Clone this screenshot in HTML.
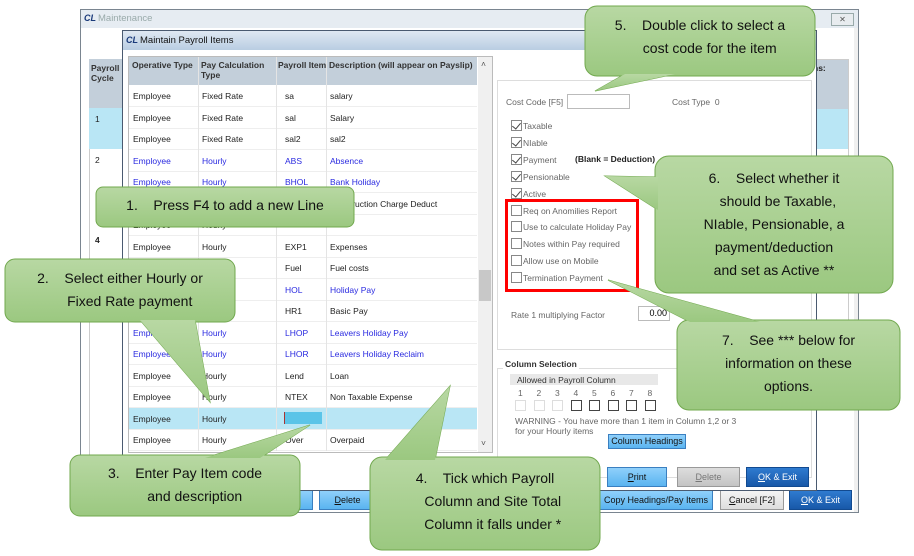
<!DOCTYPE html>
<html><head><meta charset="utf-8"><style>
*{margin:0;padding:0;box-sizing:border-box}
body{width:914px;height:556px;background:#fff;position:relative;overflow:hidden;font-family:"Liberation Sans",sans-serif}
.a{position:absolute}
.t{position:absolute;font-size:8.5px;color:#222;white-space:nowrap}
.bl{color:#2a2ae0}
.cb{position:absolute;width:11px;height:11px;border:1px solid #888;background:#fff}
.ck::after{content:"";position:absolute;left:2px;top:0px;width:4px;height:7px;border:solid #444;border-width:0 1.3px 1.3px 0;transform:rotate(40deg)}
.btn{position:absolute;height:20px;border:1px solid #3a7fc0;background:linear-gradient(#8fd0fb,#5ab4f0);font-size:9px;text-align:center;line-height:18px;color:#111}
.ct{position:absolute;font-family:"Liberation Sans",sans-serif;font-size:14px;color:#111;text-align:center;line-height:23px}
</style></head><body>
<div class="a" style="left:80px;top:9px;width:779px;height:504px;border:1px solid #7a8590;background:#fff"></div>
<div class="a" style="left:81px;top:10px;width:777px;height:18px;background:#e6ecf2"></div>
<div class="t" style="left:84px;top:13px;font-size:9px;font-weight:bold;color:#1a3a7a;font-style:italic">CL</div>
<div class="t" style="left:98px;top:13px;font-size:9.5px;color:#9aa">Maintenance</div>
<div class="a" style="left:831px;top:13px;width:23px;height:13px;border:1px solid #9aa;background:#e8ecef;font-size:8px;text-align:center;line-height:11px;color:#555">✕</div>
<div class="a" style="left:854px;top:28px;width:4px;height:484px;background:#f0f0f0"></div>
<div class="a" style="left:89px;top:59px;width:33px;height:410px;border-left:1px solid #ccc;background:#fff"></div>
<div class="a" style="left:89px;top:59px;width:33px;height:49px;background:#c3cfda"></div>
<div class="t" style="left:91px;top:63px;line-height:10px;font-weight:bold;color:#333">Payroll<br>Cycle</div>
<div class="a" style="left:89px;top:108px;width:33px;height:41px;background:#b9e6f5"></div>
<div class="t" style="left:95px;top:114px">1</div>
<div class="t" style="left:95px;top:155px">2</div>
<div class="t" style="left:95px;top:235px;font-weight:bold">4</div>
<div class="a" style="left:812px;top:59px;width:37px;height:300px;border:1px solid #ccc;background:#fff"></div>
<div class="a" style="left:813px;top:60px;width:35px;height:49px;background:#c3cfda"></div>
<div class="t" style="left:813px;top:63px;font-weight:bold">ns:</div>
<div class="a" style="left:813px;top:109px;width:35px;height:40px;background:#b9e6f5"></div>
<div class="btn" style="left:220px;top:490px;width:93px"></div>
<div class="btn" style="left:319px;top:490px;width:57px"><u>D</u>elete</div>
<div class="btn" style="left:599px;top:490px;width:114px">Copy Headings/Pay Items</div>
<div class="btn" style="left:720px;top:490px;width:64px;background:linear-gradient(#f4f4f4,#ddd);border-color:#999"><u>C</u>ancel [F2]</div>
<div class="btn" style="left:789px;top:490px;width:63px;background:linear-gradient(#2f7bd0,#1858a8);color:#fff;border-color:#124a90"><u>O</u>K &amp; Exit</div>
<div class="a" style="left:122px;top:30px;width:695px;height:461px;border:1px solid #4a5a70;background:#fff"></div>
<div class="a" style="left:123px;top:31px;width:693px;height:19px;background:linear-gradient(#dfe8f2,#b9cde2)"></div>
<div class="t" style="left:126px;top:35px;font-size:9px;font-weight:bold;color:#1a3a7a;font-style:italic">CL</div>
<div class="t" style="left:140px;top:35px;font-size:9.5px;color:#111">Maintain Payroll Items</div>
<div class="a" style="left:128px;top:56px;width:365px;height:397px;border:1px solid #bbb;background:#fff"></div>
<div class="a" style="left:129px;top:57px;width:348px;height:28px;background:#c3cfda"></div>
<div class="a" style="left:478px;top:57px;width:14px;height:395px;background:#f0f0f0"></div>
<div class="a" style="left:479px;top:270px;width:12px;height:31px;background:#c8c8c8"></div>
<div class="t" style="left:481px;top:59px;color:#555">˄</div>
<div class="t" style="left:481px;top:438px;color:#555">˅</div>
<div class="t" style="left:132px;top:60px;font-weight:bold;color:#333">Operative Type</div>
<div class="t" style="left:201px;top:60px;font-weight:bold;color:#333;line-height:10px">Pay Calculation<br>Type</div>
<div class="t" style="left:278px;top:60px;font-weight:bold;color:#333">Payroll Item</div>
<div class="t" style="left:329px;top:60px;font-weight:bold;color:#333">Description (will appear on Payslip)</div>
<div id="rows"></div>
<div class="a" style="left:497px;top:80px;width:315px;height:270px;border:1px solid #ddd"></div>
<div class="t" style="left:506px;top:97px;color:#666">Cost Code [F5]</div>
<div class="a" style="left:567px;top:94px;width:63px;height:15px;border:1px solid #bbb"></div>
<div class="t" style="left:672px;top:97px;color:#666">Cost Type &nbsp;0</div>
<div id="cbs"></div>
<div class="t" style="left:575px;top:154px;font-weight:bold;color:#222">(Blank = Deduction)</div>
<div class="a" style="left:505px;top:199px;width:134px;height:93px;border:3px solid #f00"></div>
<div class="t" style="left:511px;top:310px;color:#666">Rate 1 multiplying Factor</div>
<div class="a" style="left:638px;top:306px;width:32px;height:15px;border:1px solid #bbb;font-size:9px;text-align:right;padding-right:2px;line-height:13px">0.00</div>
<div class="a" style="left:497px;top:368px;width:315px;height:110px;border:1px solid #ddd"></div>
<div class="t" style="left:503px;top:359px;background:#fff;font-weight:bold;color:#333;padding:0 2px">Column Selection</div>
<div class="a" style="left:510px;top:374px;width:148px;height:11px;background:#e8e8e8"></div>
<div class="t" style="left:517px;top:375px;color:#333">Allowed in Payroll Column</div>
<div id="cols"></div>
<div class="t" style="left:515px;top:416px;color:#666;line-height:10px">WARNING - You have more than 1 item in Column 1,2 or 3<br>for your Hourly items</div>
<div class="btn" style="left:608px;top:434px;width:78px;height:15px;line-height:13px">Column Headings</div>
<div class="btn" style="left:607px;top:467px;width:60px"><u>P</u>rint</div>
<div class="btn" style="left:677px;top:467px;width:63px;background:linear-gradient(#ddd,#c4c4c4);border-color:#999;color:#777"><u>D</u>elete</div>
<div class="btn" style="left:746px;top:467px;width:63px;background:linear-gradient(#2f7bd0,#1858a8);color:#fff;border-color:#124a90"><u>O</u>K &amp; Exit</div>
<svg class="a" style="left:0;top:0" width="914" height="556">
<defs><linearGradient id="g" x1="0" y1="0" x2="0" y2="1"><stop offset="0" stop-color="#b8d8a3"/><stop offset="1" stop-color="#9bc880"/></linearGradient></defs>
<g fill="url(#g)" stroke="#71a84e" stroke-width="1">
<polygon points="140,320 195,320 210,402"/><rect x="5" y="259" width="230" height="63" rx="10"/><polygon points="140,320 195,320 210,402" stroke="none"/>
<polygon points="205,458 260,458 310,425"/><rect x="70" y="455" width="230" height="61" rx="10"/><polygon points="205,458 260,458 310,425" stroke="none"/>
<polygon points="385,460 435,460 450,386"/><rect x="370" y="457" width="230" height="93" rx="12"/><polygon points="385,460 435,460 450,386" stroke="none"/>
<polygon points="625,74 675,74 595,91"/><rect x="585" y="6" width="230" height="70" rx="12"/><polygon points="625,74 675,74 595,91" stroke="none"/>
<polygon points="658,177 658,210 605,176"/><rect x="655" y="156" width="238" height="137" rx="14"/><polygon points="658,177 658,210 605,176" stroke="none"/>
<polygon points="690,322 760,322 608,280"/><rect x="677" y="320" width="223" height="90" rx="12"/><polygon points="690,322 760,322 608,280" stroke="none"/>
<rect x="96" y="187" width="258" height="40" rx="7"/>
</g></svg>
<div class="ct" style="left:96px;top:194px;width:258px">1. &nbsp;&nbsp; Press F4 to add a new Line</div>
<div class="ct" style="left:5px;top:267px;width:230px">2. &nbsp;&nbsp; Select either Hourly or<br>&nbsp;&nbsp;&nbsp;&nbsp;&nbsp;Fixed Rate payment</div>
<div class="ct" style="left:70px;top:462px;width:230px">3. &nbsp;&nbsp; Enter Pay Item code<br>&nbsp;&nbsp;&nbsp;&nbsp;&nbsp;and description</div>
<div class="ct" style="left:370px;top:467px;width:230px">4. &nbsp;&nbsp; Tick which Payroll<br>&nbsp;&nbsp;&nbsp;&nbsp;Column and Site Total<br>&nbsp;&nbsp;&nbsp;&nbsp;Column it falls under *</div>
<div class="ct" style="left:585px;top:14px;width:230px">5. &nbsp;&nbsp; Double click to select a<br>&nbsp;&nbsp;&nbsp;&nbsp;&nbsp;cost code for the item</div>
<div class="ct" style="left:655px;top:167px;width:238px">6. &nbsp;&nbsp; Select whether it<br>&nbsp;&nbsp;should be Taxable,<br>NIable, Pensionable, a<br>payment/deduction<br>and set as Active **</div>
<div class="ct" style="left:677px;top:329px;width:223px">7. &nbsp;&nbsp; See *** below for<br>information on these<br>options.</div>
<script>
var R=[["Employee","Fixed Rate","sa","salary",0],["Employee","Fixed Rate","sal","Salary",0],["Employee","Fixed Rate","sal2","sal2",0],["Employee","Hourly","ABS","Absence",1],["Employee","Hourly","BHOL","Bank Holiday",1],["Employee","Hourly","CIS","Construction Charge Deduct",0],["Employee","Hourly","","",0],["Employee","Hourly","EXP1","Expenses",0],["Employee","Hourly","Fuel","Fuel costs",0],["Employee","Hourly","HOL","Holiday Pay",1],["Employee","Hourly","HR1","Basic Pay",0],["Employee","Hourly","LHOP","Leavers Holiday Pay",1],["Employee","Hourly","LHOR","Leavers Holiday Reclaim",1],["Employee","Hourly","Lend","Loan",0],["Employee","Hourly","NTEX","Non Taxable Expense",0],["Employee","Hourly","","",2],["Employee","Hourly","Over","Overpaid",0]];
var h="";R.forEach(function(r,i){var y=85+i*21.5;var c=r[4]==1?" bl":"";
if(r[4]==2){h+='<div class="a" style="left:129px;top:'+y+'px;width:348px;height:21px;background:#b9e6f5"></div><div class="a" style="left:284px;top:'+(y+4)+'px;width:38px;height:12px;background:#5bc4e8;border-left:1px solid #a33"></div>';}
h+='<div class="a" style="left:129px;top:'+(y+21)+'px;width:348px;height:1px;background:#eee"></div>';
var xs=[133,202,285,330];for(var k=0;k<4;k++)h+='<div class="t'+c+'" style="left:'+xs[k]+'px;top:'+(y+6)+'px">'+r[k]+'</div>';});
[198,276,326].forEach(function(x){h+='<div class="a" style="left:'+x+'px;top:57px;width:1px;height:394px;background:#e4e4e4"></div>'});
document.getElementById("rows").innerHTML=h;
var C=["Taxable","NIable","Payment","Pensionable","Active","Req on Anomilies Report","Use to calculate Holiday Pay","Notes within Pay required","Allow use on Mobile","Termination Payment"];h="";
C.forEach(function(s,i){var y=120+i*16.9;h+='<div class="cb'+(i<5?' ck':'')+'" style="left:511px;top:'+y+'px"></div><div class="t" style="left:523px;top:'+(y+1)+'px;color:#666">'+s+'</div>';});
document.getElementById("cbs").innerHTML=h;h="";
for(var i=0;i<8;i++){var x=515+i*18.5;h+='<div class="t" style="left:'+(x+3)+'px;top:388px;color:#666">'+(i+1)+'</div><div class="cb" style="left:'+x+'px;top:400px;border-color:'+(i<3?'#ddd':'#444')+'"></div>';}
document.getElementById("cols").innerHTML=h;
</script>
</body></html>
